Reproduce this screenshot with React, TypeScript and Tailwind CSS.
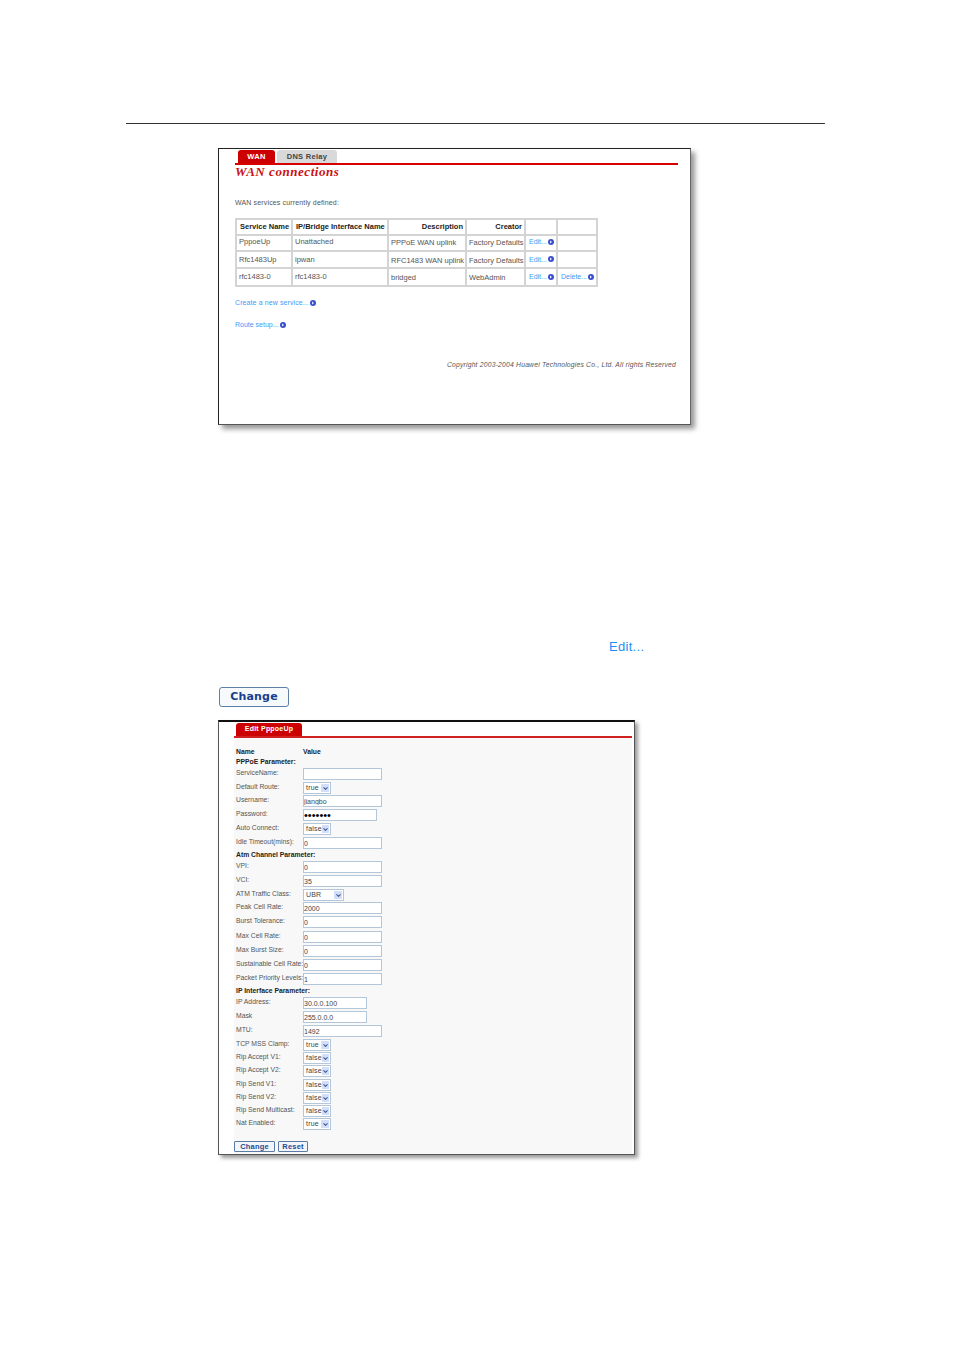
import { ChevronDown } from 'lucide-react'

type FormRow =
  | { kind: 'head'; label: string; value?: string; h: number }
  | { kind: 'input'; label: string; value?: string; h: number; w?: string; type?: string }
  | { kind: 'select'; label: string; value: string; h: number; w?: string }

const services = [
  { name: 'PppoeUp', iface: 'Unattached', desc: 'PPPoE WAN uplink', creator: 'Factory Defaults', del: false, h: 'h-[16px]', top: 'pb-[2px]', low: 'pt-0' },
  { name: 'Rfc1483Up', iface: 'ipwan', desc: 'RFC1483 WAN uplink', creator: 'Factory Defaults', del: false, h: 'h-[17px]', top: 'pb-0', low: 'pt-[2px]' },
  { name: 'rfc1483-0', iface: 'rfc1483-0', desc: 'bridged', creator: 'WebAdmin', del: true, h: 'h-[18px]', top: 'pb-0', low: 'pt-[2px]' },
]

const rows: FormRow[] = [
  { kind: 'head', label: 'Name', value: 'Value', h: 10 },
  { kind: 'head', label: 'PPPoE Parameter:', h: 11 },
  { kind: 'input', label: 'ServiceName:', h: 14 },
  { kind: 'select', label: 'Default Route:', value: 'true', h: 13 },
  { kind: 'input', label: 'Username:', value: 'jiangbo', h: 14 },
  { kind: 'input', label: 'Password:', value: 'jiangbo', type: 'password', w: 'w-[74px]', h: 14 },
  { kind: 'select', label: 'Auto Connect:', value: 'false', h: 14 },
  { kind: 'input', label: 'Idle Timeout(mins):', value: '0', h: 13 },
  { kind: 'head', label: 'Atm Channel Parameter:', h: 11 },
  { kind: 'input', label: 'VPI:', value: '0', h: 14 },
  { kind: 'input', label: 'VCI:', value: '35', h: 14 },
  { kind: 'select', label: 'ATM Traffic Class:', value: 'UBR', w: 'w-[41px]', h: 13 },
  { kind: 'input', label: 'Peak Cell Rate:', value: '2000', h: 14 },
  { kind: 'input', label: 'Burst Tolerance:', value: '0', h: 15 },
  { kind: 'input', label: 'Max Cell Rate:', value: '0', h: 14 },
  { kind: 'input', label: 'Max Burst Size:', value: '0', h: 14 },
  { kind: 'input', label: 'Sustainable Cell Rate:', value: '0', h: 14 },
  { kind: 'input', label: 'Packet Priority Levels:', value: '1', h: 13 },
  { kind: 'head', label: 'IP Interface Parameter:', h: 11 },
  { kind: 'input', label: 'IP Address:', value: '30.0.0.100', w: 'w-[64px]', h: 14 },
  { kind: 'input', label: 'Mask', value: '255.0.0.0', w: 'w-[64px]', h: 14 },
  { kind: 'input', label: 'MTU:', value: '1492', h: 14 },
  { kind: 'select', label: 'TCP MSS Clamp:', value: 'true', h: 13 },
  { kind: 'select', label: 'Rip Accept V1:', value: 'false', h: 13 },
  { kind: 'select', label: 'Rip Accept V2:', value: 'false', h: 14 },
  { kind: 'select', label: 'Rip Send V1:', value: 'false', h: 13 },
  { kind: 'select', label: 'Rip Send V2:', value: 'false', h: 13 },
  { kind: 'select', label: 'Rip Send Multicast:', value: 'false', h: 13 },
  { kind: 'select', label: 'Nat Enabled:', value: 'true', h: 13 },
]

function GoDot() {
  return (
    <svg width="6" height="6" viewBox="0 0 6 6" className="inline-block ml-[1px] align-[-0.5px]">
      <circle cx="3" cy="3" r="3" fill="#3a4fd0" />
      <path d="M2 1.5 L4 3 L2 4.5 Z" fill="#e4ecff" />
    </svg>
  )
}

function LinkText({ children }: { children: string }) {
  return (
    <span className="text-[7px] text-[#3f9bf5] whitespace-nowrap">
      {children}
      <GoDot />
    </span>
  )
}

function Field({ row }: { row: FormRow }) {
  if (row.kind === 'input') {
    return (
      <input
        readOnly
        type={row.type ?? 'text'}
        value={row.value ?? ''}
        className={`${row.w ?? 'w-[79px]'} h-[12px] border border-[#b4c6da] bg-white pl-0 outline-none box-border ${row.type === 'password' ? 'text-[11px] leading-none text-black' : 'text-[7px] text-[#444]'}`}
      />
    )
  }
  if (row.kind === 'select') {
    return (
      <div className={`${row.w ?? 'w-[28px]'} h-[12px] flex items-center justify-between border border-[#b4c6da] bg-white pl-[2px] pr-[1px]`}>
        <span className="text-[7px] text-[#444] tracking-[0.2px]">{row.value}</span>
        <span className="w-[8px] h-[8px] bg-[#d3dff8] flex items-center justify-center">
          <ChevronDown size={7} strokeWidth={3.5} className="text-[#3d5a9c]" />
        </span>
      </div>
    )
  }
  return null
}

export default function App() {
  return (
    <div className="min-h-[1349px] bg-white font-['Liberation_Sans',Arial,sans-serif] overflow-hidden">
      <div className="ml-[126px] mt-[123px] w-[699px] h-px bg-[#333]" />

      {/* WAN connections panel */}
      <div className="ml-[218px] mt-[24px] w-[473px] h-[277px] border border-[#222] border-r-[#666] border-b-[#555] bg-white shadow-[4px_4px_5px_#999] pl-[16px] pr-[12px]">
        <div className="flex h-[14px] items-end gap-[2px] pl-[3px]">
          <div className="w-[37px] h-[13px] bg-[#cc0000] rounded-t-[3px] text-white text-[7.5px] font-bold tracking-[0.4px] text-center leading-[13px]">WAN</div>
          <div className="w-[60px] h-[13px] bg-[#d9d9d9] rounded-t-[3px] text-[#444] text-[7.5px] font-bold tracking-[0.3px] text-center leading-[13px]">DNS Relay</div>
        </div>
        <div className="h-[2px] bg-[#d60000]" />
        <h1 className="font-['Liberation_Serif',serif] italic font-bold text-[13px] tracking-[0.55px] text-[#cc1111] leading-[14px]">WAN connections</h1>
        <p className="mt-[19px] text-[7px] leading-[10px] text-[#555] tracking-[0.15px]">WAN services currently defined:</p>

        <table className="mt-[10px] table-fixed border-collapse text-[7.5px] leading-[10px] text-[#555] border-b-2 border-b-[#aaa]">
          <colgroup>
            <col className="w-[56px]" />
            <col className="w-[96px]" />
            <col className="w-[78px]" />
            <col className="w-[59px]" />
            <col className="w-[32px]" />
            <col className="w-[40px]" />
          </colgroup>
          <thead>
            <tr className="h-[16px] text-[#222] font-bold">
              <th className="border-2 border-[#d4d4d4] pl-[3px] text-left font-bold">Service Name</th>
              <th className="border-2 border-[#d4d4d4] pl-[3px] text-left font-bold whitespace-nowrap">IP/Bridge Interface Name</th>
              <th className="border-2 border-[#d4d4d4] pr-[2px] text-right font-bold">Description</th>
              <th className="border-2 border-[#d4d4d4] pr-[2px] text-right font-bold">Creator</th>
              <th className="border-2 border-[#d4d4d4]" />
              <th className="border-2 border-[#d4d4d4]" />
            </tr>
          </thead>
          <tbody>
            {services.map((s) => (
              <tr key={s.name} className={s.h}>
                <td className={`border-2 border-[#d4d4d4] pl-[2px] ${s.top}`}>{s.name}</td>
                <td className={`border-2 border-[#d4d4d4] pl-[2px] ${s.top}`}>{s.iface}</td>
                <td className={`border-2 border-[#d4d4d4] pl-[2px] whitespace-nowrap ${s.low}`}>{s.desc}</td>
                <td className={`border-2 border-[#d4d4d4] pl-[2px] whitespace-nowrap ${s.low}`}>{s.creator}</td>
                <td className={`border-2 border-[#d4d4d4] pl-[3px] ${s.top}`}><LinkText>Edit...</LinkText></td>
                <td className={`border-2 border-[#d4d4d4] pl-[3px] ${s.top}`}>{s.del && <LinkText>Delete...</LinkText>}</td>
              </tr>
            ))}
          </tbody>
        </table>

        <div className="mt-[8px] leading-[10px] tracking-[0.1px]"><LinkText>Create a new service...</LinkText></div>
        <div className="mt-[9px] leading-[10px]"><LinkText>Route setup...</LinkText></div>
        <p className="mt-[30px] mr-[2px] text-right italic text-[6.8px] leading-[10px] text-[#555] tracking-[0.19px] whitespace-nowrap">Copyright 2003-2004 Huawei Technologies Co., Ltd. All rights Reserved</p>
      </div>

      <div className="ml-[609px] mt-[214px] text-[13px] leading-[16px] text-[#1e8ff5] tracking-[0.3px]">Edit...</div>

      <button className="block ml-[219px] mt-[32px] w-[70px] h-[20px] rounded-[3px] border border-[#5f7fa5] bg-[#f7fafd] font-['DejaVu_Sans',sans-serif] font-bold text-[11px] leading-[18px] tracking-[0.2px] text-[#17408e]">Change</button>

      {/* Edit PppoeUp panel */}
      <div className="ml-[218px] mt-[13px] w-[417px] h-[435px] border border-[#555] border-t-2 border-t-[#111] bg-white shadow-[3px_3px_4px_#999] pl-[15px] pr-[2px]">
        <div className="h-[13px] pl-[2px] mt-[1px]">
          <div className="w-[66px] h-[13px] bg-[#cc0000] rounded-t-[3px] text-white text-[7px] font-bold tracking-[0.2px] text-center leading-[12px]">Edit PppoeUp</div>
        </div>
        <div className="h-[2px] bg-[#d02020]" />
        <div className="bg-[#f8f8f8] h-[416px] pl-[2px] pt-[9px]">
          {rows.map((row) => (
            <div key={row.label} className="flex items-start" style={{ height: row.h }}>
              <div className={`w-[67px] shrink-0 whitespace-nowrap text-[6.8px] leading-[10px] ${row.kind === 'head' ? 'font-bold text-[#222]' : 'text-[#555]'}`}>
                {row.label}
              </div>
              {row.kind === 'head' ? (
                <div className="text-[6.8px] leading-[10px] font-bold text-[#222]">{row.value}</div>
              ) : (
                <Field row={row} />
              )}
            </div>
          ))}
          <div className="flex gap-[3px] mt-[10px] -ml-[2px]">
            <button className="w-[41px] h-[11px] border border-[#5a7ba3] rounded-[1px] bg-[#f2f6fb] text-[7.5px] leading-[9px] font-bold text-[#1d4a94] tracking-[0.2px]">Change</button>
            <button className="w-[30px] h-[11px] border border-[#5a7ba3] rounded-[1px] bg-[#f2f6fb] text-[7.5px] leading-[9px] font-bold text-[#1d4a94] tracking-[0.2px]">Reset</button>
          </div>
        </div>
      </div>
    </div>
  )
}
